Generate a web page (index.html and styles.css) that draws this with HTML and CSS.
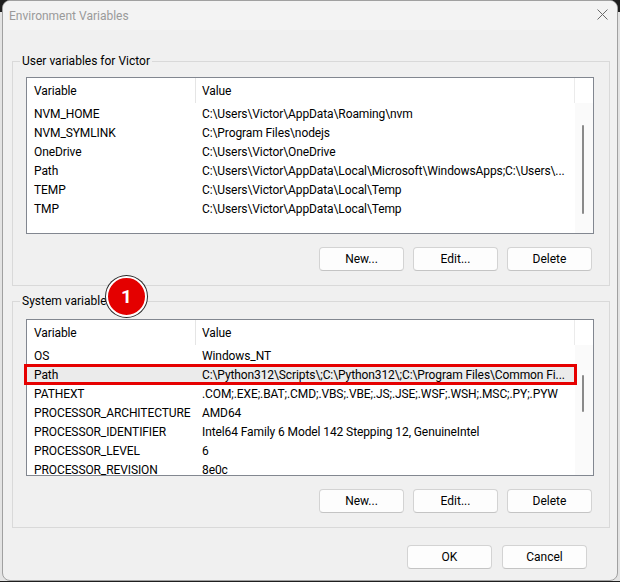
FILE: index.html
```html
<!DOCTYPE html>
<html lang="en">
<head>
  <meta charset="UTF-8">
  <title>Environment Variables</title>
  <link rel="stylesheet" href="styles.css">
</head>
<body>

  <div class="window">
    <div class="titlebar">
      <span>Environment Variables</span>
      <svg class="close" width="11" height="11" viewBox="0 0 11 11">
        <path d="M0.5 0.5 L10.5 10.5 M10.5 0.5 L0.5 10.5" stroke="#6a6a6a" stroke-width="1" fill="none"/>
      </svg>
    </div>

    <div class="content">

      <!-- variables de l'utilisateur -->
      <fieldset class="group group-user">
        <legend>User variables for Victor</legend>
        <div class="list">
          <div class="list-main">
            <div class="list-head">
              <div class="col-var">Variable</div>
              <div class="col-val">Value</div>
            </div>
            <div class="list-rows">
              <div class="row"><div class="col-var">NVM_HOME</div><div class="col-val">C:\Users\Victor\AppData\Roaming\nvm</div></div>
              <div class="row"><div class="col-var">NVM_SYMLINK</div><div class="col-val">C:\Program Files\nodejs</div></div>
              <div class="row"><div class="col-var">OneDrive</div><div class="col-val">C:\Users\Victor\OneDrive</div></div>
              <div class="row"><div class="col-var">Path</div><div class="col-val">C:\Users\Victor\AppData\Local\Microsoft\WindowsApps;C:\Users\...</div></div>
              <div class="row"><div class="col-var">TEMP</div><div class="col-val">C:\Users\Victor\AppData\Local\Temp</div></div>
              <div class="row"><div class="col-var">TMP</div><div class="col-val">C:\Users\Victor\AppData\Local\Temp</div></div>
            </div>
          </div>
          <div class="list-scroll">
            <div class="scroll-head"></div>
            <div class="scroll-track"><div class="thumb thumb-user"></div></div>
          </div>
        </div>
        <div class="actions">
          <button>New...</button>
          <button>Edit...</button>
          <button>Delete</button>
        </div>
      </fieldset>

      <!-- variables du système -->
      <fieldset class="group group-system">
        <legend>System variables:<span class="badge">1</span></legend>
        <div class="list">
          <div class="list-main">
            <div class="list-head">
              <div class="col-var">Variable</div>
              <div class="col-val">Value</div>
            </div>
            <div class="list-rows">
              <div class="row"><div class="col-var">OS</div><div class="col-val">Windows_NT</div></div>
              <div class="row selected"><div class="col-var">Path</div><div class="col-val">C:\Python312\Scripts\;C:\Python312\;C:\Program Files\Common Fi...</div></div>
              <div class="row"><div class="col-var">PATHEXT</div><div class="col-val">.COM;.EXE;.BAT;.CMD;.VBS;.VBE;.JS;.JSE;.WSF;.WSH;.MSC;.PY;.PYW</div></div>
              <div class="row"><div class="col-var">PROCESSOR_ARCHITECTURE</div><div class="col-val">AMD64</div></div>
              <div class="row"><div class="col-var">PROCESSOR_IDENTIFIER</div><div class="col-val">Intel64 Family 6 Model 142 Stepping 12, GenuineIntel</div></div>
              <div class="row"><div class="col-var">PROCESSOR_LEVEL</div><div class="col-val">6</div></div>
              <div class="row"><div class="col-var">PROCESSOR_REVISION</div><div class="col-val">8e0c</div></div>
            </div>
          </div>
          <div class="list-scroll">
            <div class="scroll-head"></div>
            <div class="scroll-track"><div class="thumb thumb-system"></div></div>
          </div>
          <div class="mark"></div>
        </div>
        <div class="actions">
          <button>New...</button>
          <button>Edit...</button>
          <button>Delete</button>
        </div>
      </fieldset>

      <div class="footer">
        <button>OK</button>
        <button>Cancel</button>
      </div>

    </div>
  </div>

</body>
</html>
```

FILE: styles.css
```css
body {
  margin: 0;
  background: linear-gradient(#1f1f1f 0 12px, #e3e3e3 12px);
  font-family: Roboto, "Noto Sans", sans-serif;
  font-size: 12px;
  color: #000;
}

.window {
  box-sizing: border-box;
  width: 616px;
  height: 581px;
  margin-left: 2px;
  border: 1px solid #a0a0a0;
  border-radius: 8px;
  background: #f0f0f0;
  overflow: hidden;
}

.titlebar {
  height: 29px;
  display: flex;
  align-items: center;
  justify-content: space-between;
  padding: 0 9px 0 6px;
  background: #f3f3f3;
  color: #9a9a9a;
}

.close {
  margin-bottom: 2px;
}

.content {
  padding: 23px 7px 0 9px;
}

.group {
  margin: 0;
  padding: 8px 15px 14px 13px;
  border: 1px solid #d9d9d9;
  min-width: 0;
}

.group-system {
  margin-top: 7px;
  padding-top: 10px;
}

legend {
  position: relative;
  margin-left: -6px;
  padding: 0 2px;
  line-height: 16px;
}

.badge {
  position: absolute;
  left: 86px;
  top: -17px;
  width: 37px;
  height: 37px;
  border: 2px solid #fff;
  border-radius: 50%;
  box-shadow: 0 0 0 1px #2a2a2a;
  background: #e40000;
  color: #fff;
  font-weight: bold;
  font-size: 19px;
  line-height: 37px;
  text-align: center;
}

.list {
  position: relative;
  box-sizing: border-box;
  height: 157px;
  display: flex;
  border: 1px solid #828790;
  background: #fff;
  letter-spacing: -0.1px;
}

.list-main {
  flex: 1;
  min-width: 0;
  overflow: hidden;
}

.list-head {
  height: 25px;
  display: flex;
  align-items: center;
  border-right: 1px solid #ebebeb;
}

.list-head .col-var {
  align-self: stretch;
  display: flex;
  align-items: center;
  border-right: 1px solid #e5e5e5;
}

.list-rows {
  padding-top: 1px;
}

.row {
  height: 19px;
  line-height: 20px;
  display: flex;
}

.row.selected {
  background: #ebebeb;
}

.col-var {
  box-sizing: border-box;
  width: 169px;
  flex-shrink: 0;
  padding-left: 7px;
  white-space: nowrap;
  overflow: hidden;
}

.col-val {
  flex: 1;
  min-width: 0;
  padding-left: 6px;
  white-space: nowrap;
  overflow: hidden;
}

.list-scroll {
  width: 18px;
  display: flex;
  flex-direction: column;
}

.scroll-head {
  height: 25px;
  background: #fff;
}

.scroll-track {
  flex: 1;
  background: #fafafa;
}

.thumb {
  width: 2px;
  margin-left: 7px;
  border-radius: 1px;
  background: #8a8a8a;
}

.thumb-user {
  margin-top: 22px;
  height: 89px;
}

.thumb-system {
  margin-top: 30px;
  height: 37px;
}

.mark {
  position: absolute;
  left: -3px;
  top: 44px;
  width: 553px;
  height: 21px;
  box-sizing: border-box;
  border: 3px solid #e60000;
}

.actions {
  display: flex;
  justify-content: flex-end;
  gap: 9px;
  margin-top: 13px;
  padding-right: 2px;
}

button {
  width: 85px;
  height: 24px;
  padding: 0;
  border: 1px solid #d3d3d3;
  border-bottom-color: #c4c4c4;
  border-radius: 4px;
  background: #fdfdfd;
  font-family: inherit;
  font-size: 12px;
  color: #000;
}

.footer {
  display: flex;
  justify-content: flex-end;
  gap: 10px;
  margin-top: 17px;
  padding-right: 23px;
}
```
